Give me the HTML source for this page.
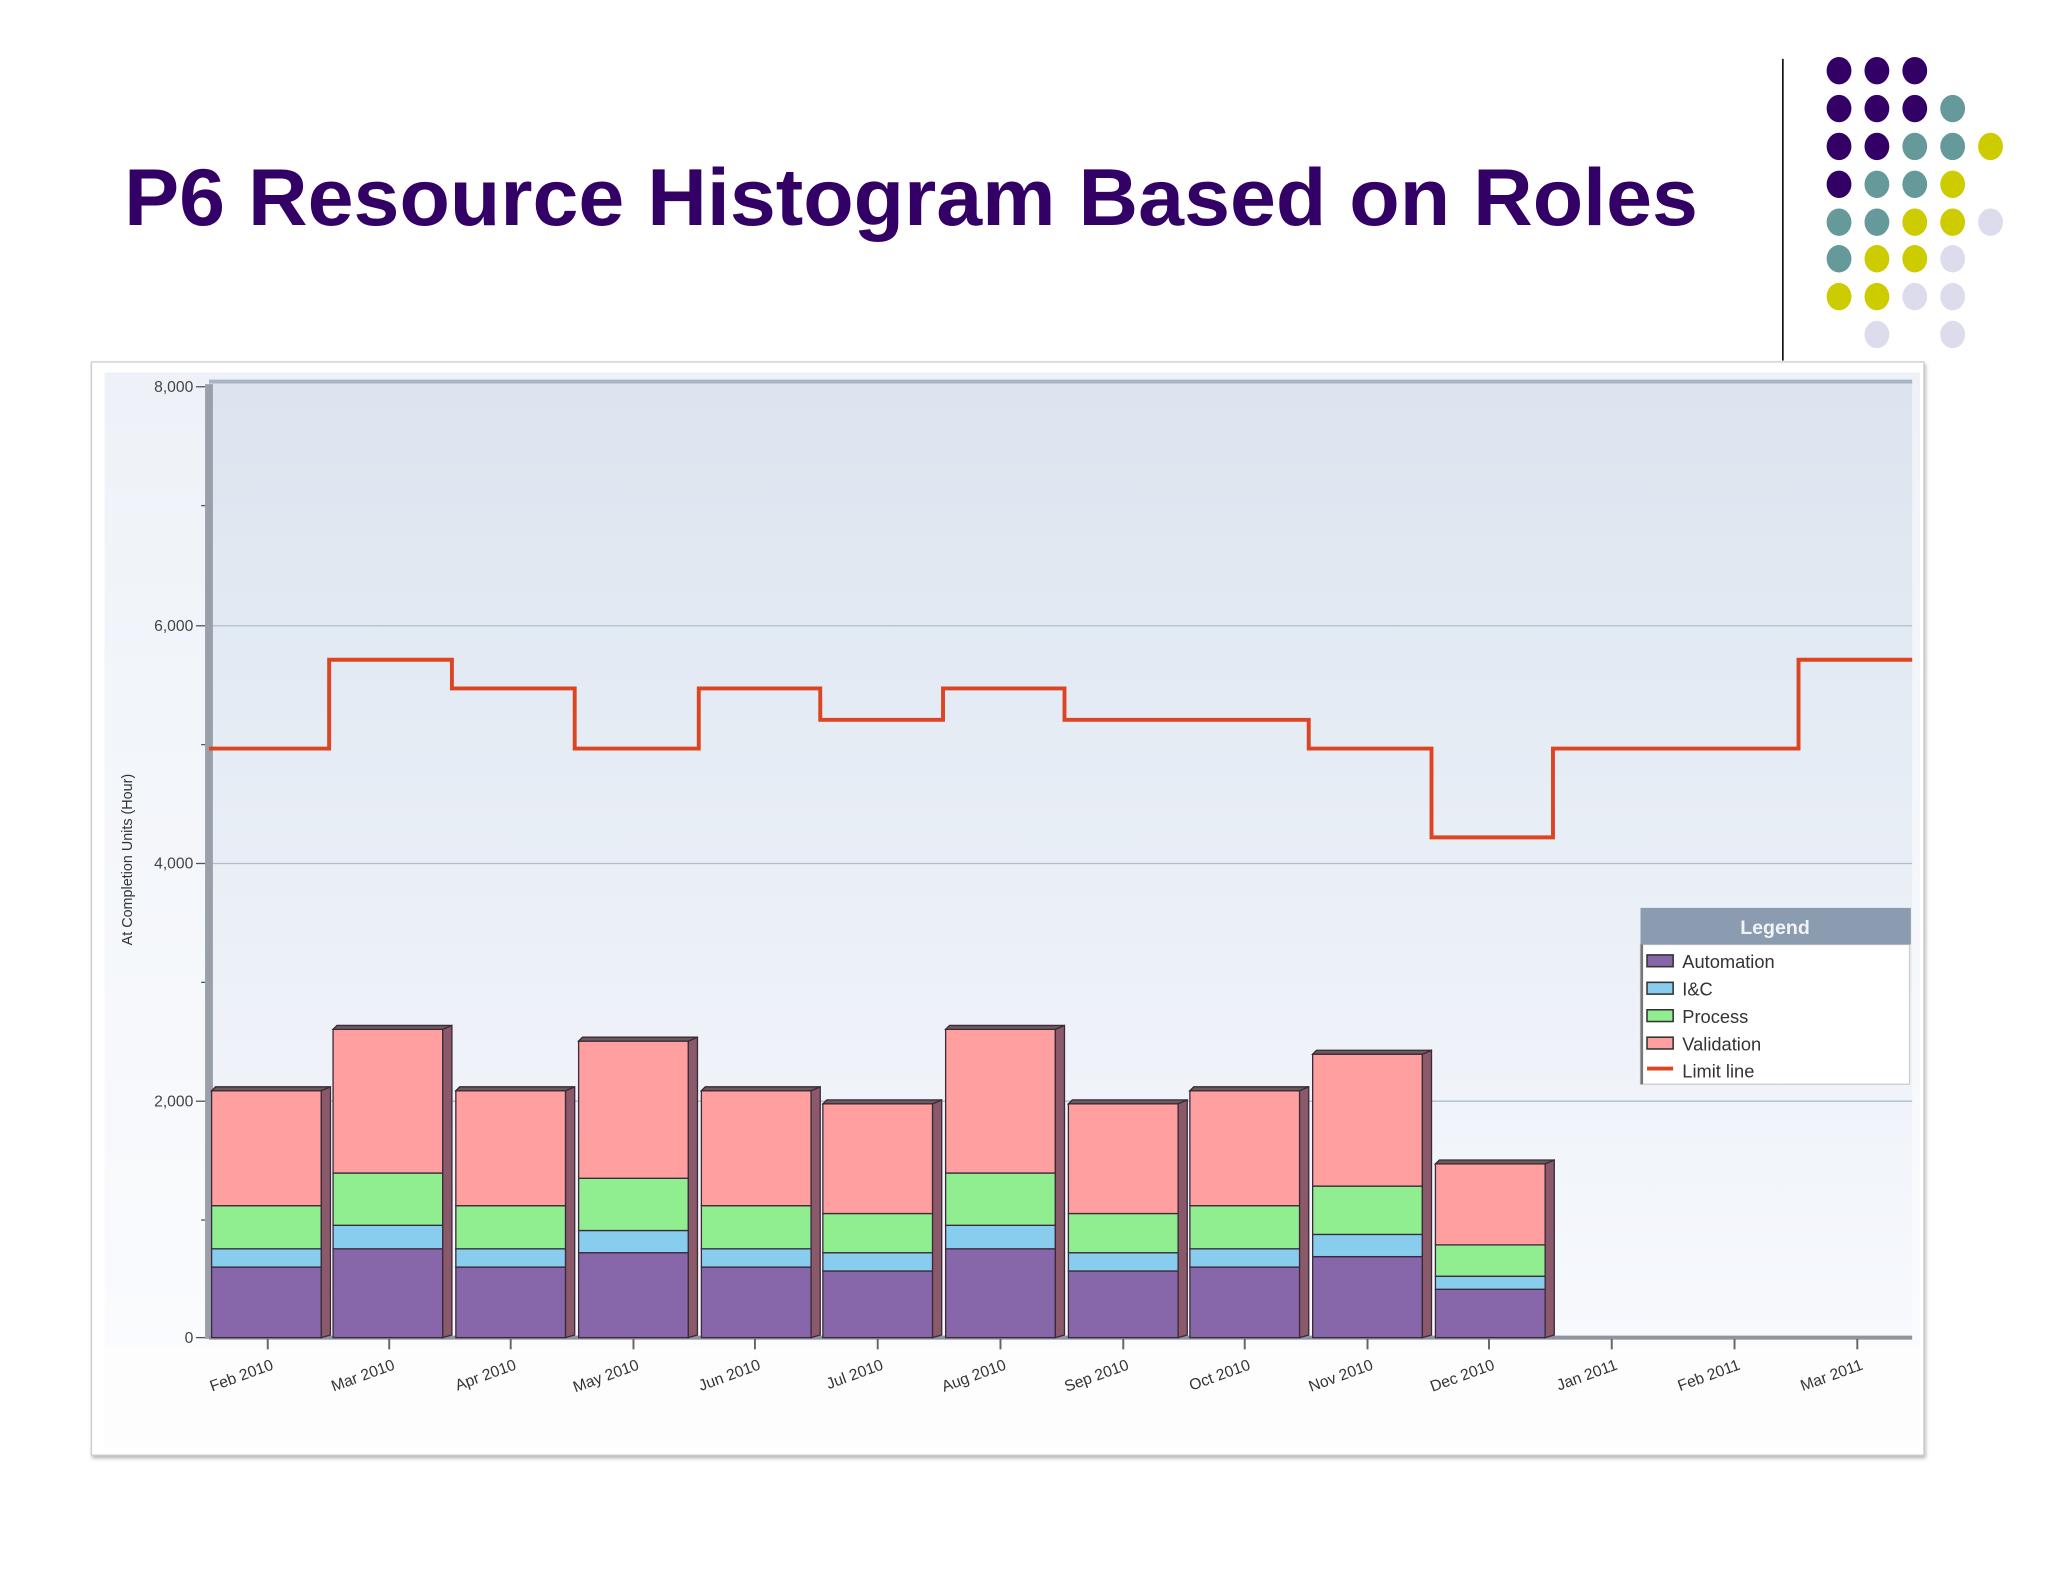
<!DOCTYPE html>
<html><head><meta charset="utf-8"><style>
html,body{margin:0;padding:0;background:#fff;}
svg{display:block}
text{font-family:"Liberation Sans",sans-serif}
</style></head><body>
<svg width="2048" height="1582" viewBox="0 0 1568 1211" xmlns="http://www.w3.org/2000/svg">
<defs>
<linearGradient id="pg" x1="0" y1="0" x2="0" y2="1"><stop offset="0" stop-color="#dbe4ef"/><stop offset="1" stop-color="#f7f9fd"/></linearGradient>
<linearGradient id="og" x1="0" y1="0" x2="0" y2="1"><stop offset="0" stop-color="#eef2f8"/><stop offset="1" stop-color="#fbfcfe"/></linearGradient>
<filter id="sh" x="-5%" y="-5%" width="110%" height="110%"><feDropShadow dx="1" dy="2" stdDeviation="1.5" flood-color="#888" flood-opacity="0.6"/></filter>
</defs>
<rect width="1568" height="1211" fill="#fff"/>
<text x="95" y="172" font-size="62" font-weight="bold" fill="#330066" textLength="1205" lengthAdjust="spacingAndGlyphs">P6 Resource Histogram Based on Roles</text>
<line x1="1365" y1="45" x2="1365" y2="276" stroke="#000" stroke-width="1.2"/>
<g>
<g fill="#330066">
<ellipse cx="1408" cy="54" rx="9.5" ry="10.5"/><ellipse cx="1437" cy="54" rx="9.5" ry="10.5"/><ellipse cx="1466" cy="54" rx="9.5" ry="10.5"/>
<ellipse cx="1408" cy="83" rx="9.5" ry="10.5"/><ellipse cx="1437" cy="83" rx="9.5" ry="10.5"/><ellipse cx="1466" cy="83" rx="9.5" ry="10.5"/>
<ellipse cx="1408" cy="112" rx="9.5" ry="10.5"/><ellipse cx="1437" cy="112" rx="9.5" ry="10.5"/>
<ellipse cx="1408" cy="141" rx="9.5" ry="10.5"/>
</g>
<g fill="#669999">
<ellipse cx="1495" cy="83" rx="9.5" ry="10.5"/>
<ellipse cx="1466" cy="112" rx="9.5" ry="10.5"/><ellipse cx="1495" cy="112" rx="9.5" ry="10.5"/>
<ellipse cx="1437" cy="141" rx="9.5" ry="10.5"/><ellipse cx="1466" cy="141" rx="9.5" ry="10.5"/>
<ellipse cx="1408" cy="170" rx="9.5" ry="10.5"/><ellipse cx="1437" cy="170" rx="9.5" ry="10.5"/>
<ellipse cx="1408" cy="198" rx="9.5" ry="10.5"/>
</g>
<g fill="#cccc00">
<ellipse cx="1524" cy="112" rx="9.5" ry="10.5"/>
<ellipse cx="1495" cy="141" rx="9.5" ry="10.5"/>
<ellipse cx="1466" cy="170" rx="9.5" ry="10.5"/><ellipse cx="1495" cy="170" rx="9.5" ry="10.5"/>
<ellipse cx="1437" cy="198" rx="9.5" ry="10.5"/><ellipse cx="1466" cy="198" rx="9.5" ry="10.5"/>
<ellipse cx="1408" cy="227" rx="9.5" ry="10.5"/><ellipse cx="1437" cy="227" rx="9.5" ry="10.5"/>
</g>
<g fill="#dcdcec">
<ellipse cx="1524" cy="170" rx="9.5" ry="10.5"/>
<ellipse cx="1495" cy="198" rx="9.5" ry="10.5"/>
<ellipse cx="1466" cy="227" rx="9.5" ry="10.5"/><ellipse cx="1495" cy="227" rx="9.5" ry="10.5"/>
<ellipse cx="1437" cy="256" rx="9.5" ry="10.5"/><ellipse cx="1495" cy="256" rx="9.5" ry="10.5"/>
</g>
</g>

<rect x="70" y="277" width="1403" height="837" fill="#fff" stroke="#ccc" filter="url(#sh)"/>
<rect x="80" y="285" width="1390" height="820" fill="url(#og)"/>
<rect x="80" y="1030" width="1390" height="78" fill="#fdfdfe"/>
<rect x="160" y="292" width="1304" height="732" fill="url(#pg)"/>
<g stroke="#b0bccb" stroke-width="1">
<line x1="160" y1="292" x2="1464" y2="292" stroke="#a9b4c4" stroke-width="3"/>
<line x1="160" y1="479" x2="1464" y2="479"/>
<line x1="160" y1="661" x2="1464" y2="661"/>
<line x1="160" y1="843" x2="1464" y2="843"/>
</g>
<rect x="157" y="294" width="6" height="731" fill="#9aa0aa"/>
<line x1="160" y1="1024" x2="1464" y2="1024" stroke="#8f949c" stroke-width="3"/>
<g stroke="#555" stroke-width="1">
<line x1="150" y1="296" x2="157" y2="296"/><line x1="150" y1="479" x2="157" y2="479"/><line x1="150" y1="661" x2="157" y2="661"/><line x1="150" y1="843" x2="157" y2="843"/><line x1="150" y1="1024" x2="157" y2="1024"/>
<line x1="154" y1="387" x2="157" y2="387"/><line x1="154" y1="570" x2="157" y2="570"/><line x1="154" y1="752" x2="157" y2="752"/><line x1="154" y1="934" x2="157" y2="934"/>
</g>
<g font-size="12" fill="#444" text-anchor="end">
<text x="148" y="300">8,000</text><text x="148" y="483">6,000</text><text x="148" y="665">4,000</text><text x="148" y="847">2,000</text><text x="148" y="1028">0</text>
</g>
<text transform="translate(101,658) rotate(-90)" font-size="11" fill="#333" text-anchor="middle">At Completion Units (Hour)</text>

<g stroke="#3a2a3a" stroke-width="1">
<!-- bars: L, a,i,p,v -->
<g id="b1"><rect x="162" y="970" width="84" height="54" fill="#8866aa"/><rect x="162" y="956" width="84" height="14" fill="#88ccee"/><rect x="162" y="923" width="84" height="33" fill="#90ee90"/><rect x="162" y="835" width="84" height="88" fill="#ff9f9f"/><polygon points="246,835 253,832 253,1022 246,1024" fill="#8a5a6a"/><polygon points="162,835 165,832 253,832 246,835" fill="#6a5a5a"/></g>
<g><rect x="255" y="956" width="84" height="68" fill="#8866aa"/><rect x="255" y="938" width="84" height="18" fill="#88ccee"/><rect x="255" y="898" width="84" height="40" fill="#90ee90"/><rect x="255" y="788" width="84" height="110" fill="#ff9f9f"/><polygon points="339,788 346,785 346,1022 339,1024" fill="#8a5a6a"/><polygon points="255,788 258,785 346,785 339,788" fill="#6a5a5a"/></g>
<g><rect x="349" y="970" width="84" height="54" fill="#8866aa"/><rect x="349" y="956" width="84" height="14" fill="#88ccee"/><rect x="349" y="923" width="84" height="33" fill="#90ee90"/><rect x="349" y="835" width="84" height="88" fill="#ff9f9f"/><polygon points="433,835 440,832 440,1022 433,1024" fill="#8a5a6a"/><polygon points="349,835 352,832 440,832 433,835" fill="#6a5a5a"/></g>
<g><rect x="443" y="959" width="84" height="65" fill="#8866aa"/><rect x="443" y="942" width="84" height="17" fill="#88ccee"/><rect x="443" y="902" width="84" height="40" fill="#90ee90"/><rect x="443" y="797" width="84" height="105" fill="#ff9f9f"/><polygon points="527,797 534,794 534,1022 527,1024" fill="#8a5a6a"/><polygon points="443,797 446,794 534,794 527,797" fill="#6a5a5a"/></g>
<g><rect x="537" y="970" width="84" height="54" fill="#8866aa"/><rect x="537" y="956" width="84" height="14" fill="#88ccee"/><rect x="537" y="923" width="84" height="33" fill="#90ee90"/><rect x="537" y="835" width="84" height="88" fill="#ff9f9f"/><polygon points="621,835 628,832 628,1022 621,1024" fill="#8a5a6a"/><polygon points="537,835 540,832 628,832 621,835" fill="#6a5a5a"/></g>
<g><rect x="630" y="973" width="84" height="51" fill="#8866aa"/><rect x="630" y="959" width="84" height="14" fill="#88ccee"/><rect x="630" y="929" width="84" height="30" fill="#90ee90"/><rect x="630" y="845" width="84" height="84" fill="#ff9f9f"/><polygon points="714,845 721,842 721,1022 714,1024" fill="#8a5a6a"/><polygon points="630,845 633,842 721,842 714,845" fill="#6a5a5a"/></g>
<g><rect x="724" y="956" width="84" height="68" fill="#8866aa"/><rect x="724" y="938" width="84" height="18" fill="#88ccee"/><rect x="724" y="898" width="84" height="40" fill="#90ee90"/><rect x="724" y="788" width="84" height="110" fill="#ff9f9f"/><polygon points="808,788 815,785 815,1022 808,1024" fill="#8a5a6a"/><polygon points="724,788 727,785 815,785 808,788" fill="#6a5a5a"/></g>
<g><rect x="818" y="973" width="84" height="51" fill="#8866aa"/><rect x="818" y="959" width="84" height="14" fill="#88ccee"/><rect x="818" y="929" width="84" height="30" fill="#90ee90"/><rect x="818" y="845" width="84" height="84" fill="#ff9f9f"/><polygon points="902,845 909,842 909,1022 902,1024" fill="#8a5a6a"/><polygon points="818,845 821,842 909,842 902,845" fill="#6a5a5a"/></g>
<g><rect x="911" y="970" width="84" height="54" fill="#8866aa"/><rect x="911" y="956" width="84" height="14" fill="#88ccee"/><rect x="911" y="923" width="84" height="33" fill="#90ee90"/><rect x="911" y="835" width="84" height="88" fill="#ff9f9f"/><polygon points="995,835 1002,832 1002,1022 995,1024" fill="#8a5a6a"/><polygon points="911,835 914,832 1002,832 995,835" fill="#6a5a5a"/></g>
<g><rect x="1005" y="962" width="84" height="62" fill="#8866aa"/><rect x="1005" y="945" width="84" height="17" fill="#88ccee"/><rect x="1005" y="908" width="84" height="37" fill="#90ee90"/><rect x="1005" y="807" width="84" height="101" fill="#ff9f9f"/><polygon points="1089,807 1096,804 1096,1022 1089,1024" fill="#8a5a6a"/><polygon points="1005,807 1008,804 1096,804 1089,807" fill="#6a5a5a"/></g>
<g><rect x="1099" y="987" width="84" height="37" fill="#8866aa"/><rect x="1099" y="977" width="84" height="10" fill="#88ccee"/><rect x="1099" y="953" width="84" height="24" fill="#90ee90"/><rect x="1099" y="891" width="84" height="62" fill="#ff9f9f"/><polygon points="1183,891 1190,888 1190,1022 1183,1024" fill="#8a5a6a"/><polygon points="1099,891 1102,888 1190,888 1183,891" fill="#6a5a5a"/></g>
</g>

<polyline fill="none" stroke="#dd4422" stroke-width="3" points="160,573 252,573 252,505 346,505 346,527 440,527 440,573 535,573 535,527 628,527 628,551 722,551 722,527 815,527 815,551 909,551 1002,551 1002,573 1096,573 1096,641 1189,641 1189,573 1377,573 1377,505 1464,505"/>

<g stroke="#666" stroke-width="1.5">
<line x1="205" y1="1025" x2="205" y2="1033"/><line x1="298" y1="1025" x2="298" y2="1033"/><line x1="391" y1="1025" x2="391" y2="1033"/><line x1="485" y1="1025" x2="485" y2="1033"/><line x1="578" y1="1025" x2="578" y2="1033"/><line x1="672" y1="1025" x2="672" y2="1033"/><line x1="766" y1="1025" x2="766" y2="1033"/><line x1="860" y1="1025" x2="860" y2="1033"/><line x1="953" y1="1025" x2="953" y2="1033"/><line x1="1047" y1="1025" x2="1047" y2="1033"/><line x1="1140" y1="1025" x2="1140" y2="1033"/><line x1="1234" y1="1025" x2="1234" y2="1033"/><line x1="1328" y1="1025" x2="1328" y2="1033"/><line x1="1422" y1="1025" x2="1422" y2="1033"/>
</g>
<g font-size="12" fill="#333" text-anchor="end">
<text transform="translate(210,1048) rotate(-20)">Feb 2010</text>
<text transform="translate(303,1048) rotate(-20)">Mar 2010</text>
<text transform="translate(396,1048) rotate(-20)">Apr 2010</text>
<text transform="translate(490,1048) rotate(-20)">May 2010</text>
<text transform="translate(583,1048) rotate(-20)">Jun 2010</text>
<text transform="translate(677,1048) rotate(-20)">Jul 2010</text>
<text transform="translate(771,1048) rotate(-20)">Aug 2010</text>
<text transform="translate(865,1048) rotate(-20)">Sep 2010</text>
<text transform="translate(958,1048) rotate(-20)">Oct 2010</text>
<text transform="translate(1052,1048) rotate(-20)">Nov 2010</text>
<text transform="translate(1145,1048) rotate(-20)">Dec 2010</text>
<text transform="translate(1239,1048) rotate(-20)">Jan 2011</text>
<text transform="translate(1333,1048) rotate(-20)">Feb 2011</text>
<text transform="translate(1427,1048) rotate(-20)">Mar 2011</text>
</g>

<rect x="1256" y="723" width="206" height="107" fill="#fff" stroke="#ccc"/>
<line x1="1257" y1="723" x2="1257" y2="830" stroke="#777" stroke-width="2"/>
<rect x="1256" y="695" width="207" height="28" fill="#8b9bb0"/>
<text x="1359" y="715" font-size="15" font-weight="bold" fill="#f0f4f8" text-anchor="middle">Legend</text>
<g stroke="#333" stroke-width="1.2">
<rect x="1261" y="731" width="20" height="9" fill="#8866aa"/>
<rect x="1261" y="752" width="20" height="9" fill="#88ccee"/>
<rect x="1261" y="773" width="20" height="9" fill="#90ee90"/>
<rect x="1261" y="794" width="20" height="9" fill="#ff9f9f"/>
</g>
<line x1="1261" y1="818" x2="1281" y2="818" stroke="#dd4422" stroke-width="3"/>
<g font-size="14" fill="#333">
<text x="1288" y="741">Automation</text>
<text x="1288" y="762">I&amp;C</text>
<text x="1288" y="783">Process</text>
<text x="1288" y="804">Validation</text>
<text x="1288" y="825">Limit line</text>
</g>
</svg>
</body></html>
